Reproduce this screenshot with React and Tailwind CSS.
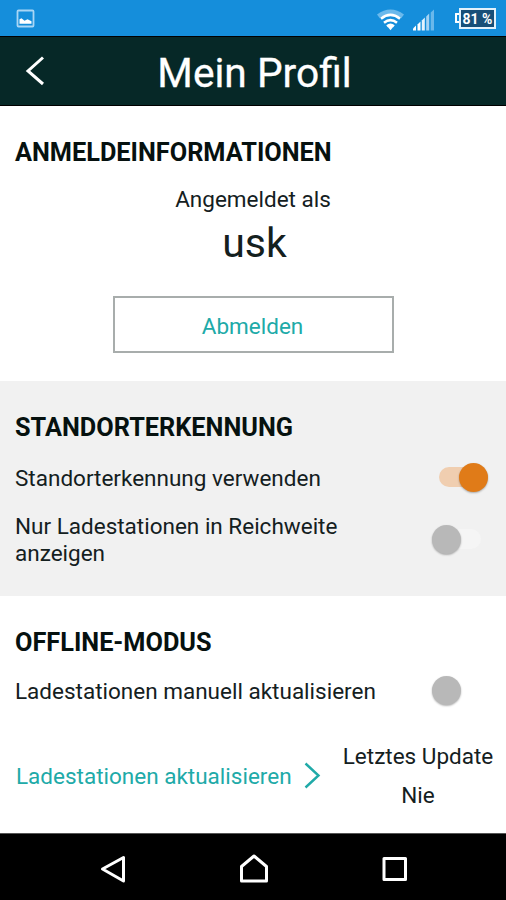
function Switch({ on = false, track = "bg-[#f5f5f5]" }) {
  return (
    <span
      role="switch"
      aria-checked={on}
      className={`mb-[2px] flex h-7 w-14 shrink-0 items-center ${on ? "justify-end" : "justify-start"}`}
    >
      <span
        className={`flex h-5 w-[49px] items-center rounded-full ${
          on ? "justify-end bg-[#f0ceb0]" : `justify-start ${track}`
        }`}
      >
        <span
          className={`h-[29px] w-[29px] shrink-0 rounded-full shadow-[0_1px_2px_rgba(0,0,0,0.3)] ${
            on ? "bg-[#e07b18]" : "bg-[#b8b8b8]"
          }`}
        />
      </span>
    </span>
  );
}

function StatusBar() {
  return (
    <div className="flex h-9 items-center bg-[#158edb] pl-4 pr-[10px] text-white">
      <svg className="h-[19px] w-[19px]" viewBox="0 0 19 19" fill="none">
        <rect x="1.5" y="1.5" width="16" height="16" rx="1" stroke="#a9d6f5" strokeWidth="1.8" />
        <path d="M3.5 14.8v-4.500l2-1 3 2.500 3-1.500 4 2v2.500z" fill="#fff" />
      </svg>
      <svg className="ml-auto mt-[3px] h-[22px] w-[27px]" viewBox="0 0 27 22" fill="none">
        <path d="M0 5.5Q13.5-4.5 27 5.5l-2.8 3.7Q13.5 1 2.8 9.2z" fill="#6bb9ec" />
        <path d="M4 9.7q9.500-7.500 19 0M7 13.700q6.500-5 13 0M10 17.200q3.500-2.500 7 0" stroke="#fff" strokeWidth="2.600" />
        <path d="M10.500 17.500q3-1.800 6 0l-3 3.800z" fill="#fff" />
      </svg>
      <svg className="ml-[9px] mt-[3px] h-[22px] w-[22px]" viewBox="0 0 22 22">
        <path d="M0 21.500v-2l3-3v5z" fill="#fff" />
        <path d="M4.500 21.500v-6l3-3v9z" fill="#fff" />
        <path d="M8.800 21.500v-10l3-3v13z" fill="#e4f2fc" />
        <path d="M13.200 21.500v-14l3-3v17z" fill="#a4d2f3" />
        <path d="M17.700 21.500v-18l3.300-3v21z" fill="#69b8eb" />
      </svg>
      <div className="ml-[20px] flex items-center">
        <span className="h-[10px] w-[4px] rounded-l-[1px] border-2 border-r-0 border-white" />
        <span className="flex h-[21px] w-[37px] items-center justify-center border-2 border-[#e2f1fb] bg-[#174f78] pt-px text-[14px] font-bold leading-none whitespace-nowrap">
          81 %
        </span>
      </div>
    </div>
  );
}

function Heading({ children }) {
  return (
    <h2 className="h-[30px] text-[25.300px] leading-[30px] font-bold whitespace-nowrap text-[#06110f]">
      {children}
    </h2>
  );
}

export default function App() {
  return (
    <div className="flex h-[900px] w-[506px] flex-col overflow-hidden bg-white font-['Roboto',sans-serif] text-[22.500px] leading-[26px] text-[#14201e]">
      <StatusBar />

      <header className="grid h-[70px] grid-cols-[70px_1fr_70px] items-center border-y border-black bg-[#062827]">
        <svg className="ml-[25px] h-[30px] w-5" viewBox="0 0 20 30" fill="none">
          <path d="M18 1.500 3 15l15 13" stroke="#fff" strokeWidth="3" />
        </svg>
        <h1 className="pl-[3px] pt-[4px] text-center text-[40.700px] leading-[48px] whitespace-nowrap text-white [-webkit-text-stroke:0.300px_white]">
          Mein Profil
        </h1>
      </header>

      <section className="flex h-[275px] flex-col px-[15px] pt-8">
        <Heading>ANMELDEINFORMATIONEN</Heading>
        <p className="mt-[18px] text-center">Angemeldet als</p>
        <p className="mt-[7px] pl-[3px] text-center text-[41px] leading-[48px]">usk</p>
        <button className="mt-[29px] h-[57px] w-[281px] self-center border-2 border-[#a8adac] pt-[2px] pr-px text-[#20aaa8]">
          Abmelden
        </button>
      </section>

      <section className="h-[215px] bg-[#f1f1f1] pl-[15px] pr-[18px] pt-8">
        <Heading>STANDORTERKENNUNG</Heading>
        <div className="mt-[22px] flex h-[26px] items-center justify-between">
          <span className="whitespace-nowrap">Standorterkennung verwenden</span>
          <Switch on />
        </div>
        <div className="mt-[22px] flex h-[54px] items-center justify-between leading-[27px]">
          <span className="whitespace-nowrap">
            Nur Ladestationen in Reichweite
            <br />
            anzeigen
          </span>
          <Switch />
        </div>
      </section>

      <section className="h-[237px] px-[15px] pt-8">
        <Heading>OFFLINE-MODUS</Heading>
        <div className="mt-5 flex h-[26px] items-center justify-between pr-[3px]">
          <span className="whitespace-nowrap">Ladestationen manuell aktualisieren</span>
          <Switch track="bg-white" />
        </div>
        <div className="mt-[39px] flex h-[65px] items-center">
          <a className="flex items-center whitespace-nowrap text-[#20aaa8]">
            <span className="w-[289px] pl-px">Ladestationen aktualisieren</span>
            <svg className="h-7 w-[18px]" viewBox="0 0 18 28" fill="none">
              <path d="m1.500 1.500 13 12-13 12" stroke="currentColor" strokeWidth="2.400" />
            </svg>
          </a>
          <div className="ml-auto mr-[-2px] flex w-[150px] flex-col items-center gap-[13px] whitespace-nowrap">
            <span>Letztes Update</span>
            <span>Nie</span>
          </div>
        </div>
      </section>

      <nav className="h-[67px] border-t border-[#555] bg-black">
        <svg
          className="h-[66px] w-[506px]"
          viewBox="0 834 506 66"
          fill="none"
          stroke="#fff"
          strokeWidth="3"
          strokeLinejoin="round"
        >
          <path d="M102.500 869 123.500 857.500v23.500z" />
          <path d="M241.500 881v-14.500l12.500-10.500 12.500 10.500v14.500z" />
          <path d="M384 858.500h21.500v21h-21.500z" />
        </svg>
      </nav>
    </div>
  );
}
